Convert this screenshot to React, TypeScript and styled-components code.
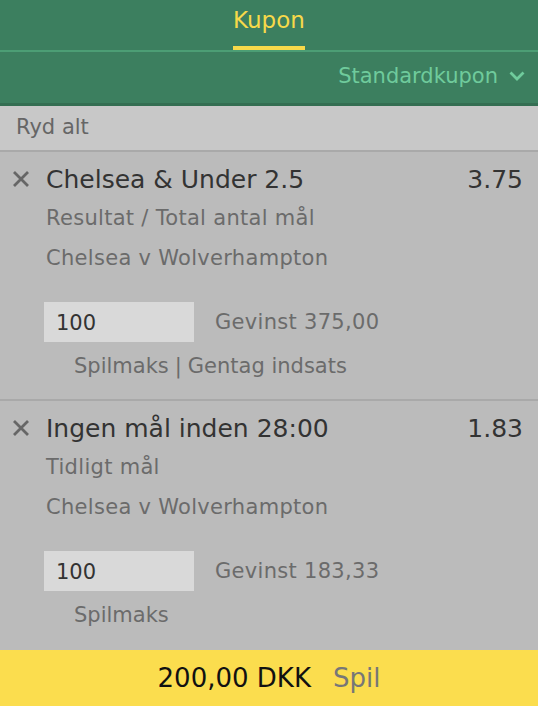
import React from 'react';
import styled, { createGlobalStyle } from 'styled-components';

const GlobalStyle = createGlobalStyle`
  html, body {
    margin: 0;
    padding: 0;
    background: #bbbbbb;
  }
  * {
    box-sizing: border-box;
  }
`;

type Bet = {
  title: string;
  odds: string;
  market: string;
  event: string;
  stake: string;
  winnings: string;
  repeat: boolean;
};

const bets: Bet[] = [
  {
    title: 'Chelsea & Under 2.5',
    odds: '3.75',
    market: 'Resultat / Total antal mål',
    event: 'Chelsea v Wolverhampton',
    stake: '100',
    winnings: '375,00',
    repeat: true,
  },
  {
    title: 'Ingen mål inden 28:00',
    odds: '1.83',
    market: 'Tidligt mål',
    event: 'Chelsea v Wolverhampton',
    stake: '100',
    winnings: '183,33',
    repeat: false,
  },
];

const CloseIcon = () => (
  <svg width="18" height="18" viewBox="0 0 18 18">
    <path d="M2 2 L16 16 M16 2 L2 16" stroke="#666" strokeWidth="2.8" />
  </svg>
);

const ChevronIcon = () => (
  <svg width="16" height="10" viewBox="0 0 16 10">
    <path d="M1.5 1.5 L8 8 L14.5 1.5" stroke="#6fcb9c" strokeWidth="2.8" fill="none" />
  </svg>
);

const App = () => (
  <Page>
    <GlobalStyle />
    <Header>
      <TabBar>
        <Tab>Kupon</Tab>
      </TabBar>
      <TypeRow>
        <TypeSelect>
          Standardkupon
          <ChevronIcon />
        </TypeSelect>
      </TypeRow>
    </Header>
    <ClearBar>Ryd alt</ClearBar>
    <BetList>
      {bets.map((bet) => (
        <BetItem key={bet.title}>
          <TitleRow>
            <CloseButton>
              <CloseIcon />
            </CloseButton>
            <Title>{bet.title}</Title>
            <Odds>{bet.odds}</Odds>
          </TitleRow>
          <Details>
            <Meta>{bet.market}</Meta>
            <Meta>{bet.event}</Meta>
            <StakeRow>
              <StakeInput>{bet.stake}</StakeInput>
              <Winnings>Gevinst {bet.winnings}</Winnings>
            </StakeRow>
            <Links>
              Spilmaks
              {bet.repeat && (
                <>
                  <Sep>|</Sep>
                  Gentag indsats
                </>
              )}
            </Links>
          </Details>
        </BetItem>
      ))}
    </BetList>
    <Footer>
      <Total>200,00 DKK</Total>
      <PlaceBet>Spil</PlaceBet>
    </Footer>
  </Page>
);

const Page = styled.div`
  width: 538px;
  height: 706px;
  display: flex;
  flex-direction: column;
  background: #bbbbbb;
  font-family: 'DejaVu Sans', sans-serif;
  overflow: hidden;
`;

const Header = styled.div`
  flex-shrink: 0;
  background: #3c7f5f;
`;

const TabBar = styled.div`
  height: 52px;
  display: flex;
  justify-content: center;
  align-items: flex-start;
  border-bottom: 2px solid #4c9e75;
`;

const Tab = styled.div`
  color: #f7d94a;
  font-size: 23px;
  height: 50px;
  padding-bottom: 6px;
  display: flex;
  align-items: center;
  border-bottom: 4px solid #f7d94a;
`;

const TypeRow = styled.div`
  height: 54px;
  display: flex;
  justify-content: flex-end;
  align-items: center;
  padding: 0 13px 4px 0;
  border-bottom: 3px solid #346e52;
`;

const TypeSelect = styled.div`
  display: flex;
  align-items: center;
  gap: 11px;
  color: #6fcb9c;
  font-size: 21px;
`;

const ClearBar = styled.div`
  flex-shrink: 0;
  height: 46px;
  background: #c8c8c8;
  color: #666;
  font-size: 21px;
  padding: 0 16px 2px;
  display: flex;
  align-items: center;
  border-bottom: 2px solid #a9a9a9;
`;

const BetList = styled.div`
  flex: 1;
  display: flex;
  flex-direction: column;
  overflow: hidden;
`;

const BetItem = styled.div`
  flex-shrink: 0;
  padding: 10px 14px 9px 12px;
  border-bottom: 2px solid #a9a9a9;

  &:last-child {
    border-bottom: none;
  }
`;

const TitleRow = styled.div`
  display: flex;
  align-items: center;
  height: 34px;
`;

const CloseButton = styled.span`
  width: 34px;
  display: flex;
  align-items: center;
`;

const Title = styled.div`
  flex: 1;
  color: #333;
  font-size: 25px;
`;

const Odds = styled.div`
  color: #333;
  font-size: 25px;
  margin-right: 1px;
`;

const Details = styled.div`
  padding-left: 34px;
  margin-top: 2px;
  display: flex;
  flex-direction: column;
`;

const Meta = styled.div`
  color: #6b6b6b;
  font-size: 21px;
  letter-spacing: 0.3px;
  height: 40px;
  display: flex;
  align-items: center;
`;

const StakeRow = styled.div`
  display: flex;
  align-items: center;
  gap: 21px;
  margin-top: 24px;
  margin-left: -2px;
`;

const StakeInput = styled.div`
  width: 150px;
  height: 40px;
  background: #d9d9d9;
  color: #333;
  font-size: 21px;
  padding: 2px 12px 0;
  display: flex;
  align-items: center;
`;

const Winnings = styled.div`
  color: #6b6b6b;
  font-size: 21px;
  letter-spacing: 0.3px;
`;

const Links = styled.div`
  color: #6b6b6b;
  font-size: 21px;
  padding-left: 28px;
  height: 48px;
  display: flex;
  align-items: center;
`;

const Sep = styled.span`
  margin: 0 6px;
`;

const Footer = styled.div`
  flex-shrink: 0;
  height: 56px;
  background: #fbdd4e;
  display: flex;
  justify-content: center;
  align-items: center;
  gap: 22px;
`;

const Total = styled.div`
  color: #111;
  font-size: 26px;
`;

const PlaceBet = styled.div`
  color: #777;
  font-size: 26px;
`;

export default App;
